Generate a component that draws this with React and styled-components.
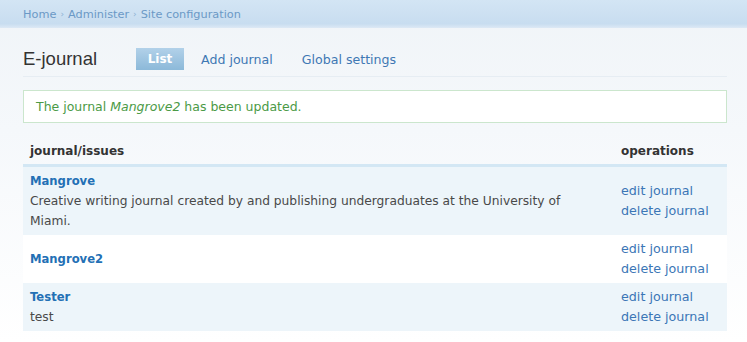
import React from "react";
import styled, { createGlobalStyle } from "styled-components";

const Global = createGlobalStyle`
  html, body { margin: 0; padding: 0; background: #fff; }
  body { font-family: "DejaVu Sans", Verdana, sans-serif; font-size: 12px; color: #494949; }
  * { box-sizing: border-box; }
`;

const Page = styled.div`
  width: 747px;
  min-height: 342px;
  background: linear-gradient(#f0f4f8 0px, #f5f8fb 130px, #ffffff 342px);
`;

const TopBar = styled.div`
  height: 28px;
  padding-left: 23px;
  display: flex;
  align-items: center;
  background: linear-gradient(#d3e5f4, #c8ddf0 85%, #dde9f5);
  font-size: 11.3px;
  color: #6b99c6;
`;

const Crumb = styled.span`
  color: #6b99c6;
`;

const Sep = styled.span`
  color: #8fb2d3;
  margin: 0 4px;
  font-size: 9px;
`;

const Main = styled.div`
  padding: 0 20px 0 23px;
`;

const TitleRow = styled.div`
  display: flex;
  align-items: center;
  padding: 20px 0 6px;
  border-bottom: 1px solid #e6edf3;
`;

const Title = styled.h1`
  margin: 0;
  font-family: "Liberation Sans", Arial, sans-serif;
  font-weight: normal;
  font-size: 18.5px;
  line-height: 22px;
  color: #333;
  width: 113px;
`;

const Tabs = styled.div`
  display: flex;
  align-items: center;
`;

const Tab = styled.span`
  display: inline-flex;
  align-items: center;
  justify-content: center;
  height: 22px;
  width: ${(p) => (p.$active ? "48px" : "auto")};
  margin-right: ${(p) => p.$gap}px;
  font-size: ${(p) => (p.$active ? "12px" : "12.6px")};
  font-weight: ${(p) => (p.$active ? "bold" : "normal")};
  color: ${(p) => (p.$active ? "#fff" : "#3f78b4")};
  background: ${(p) => (p.$active ? "linear-gradient(#b2d1e9, #8cb9d9)" : "transparent")};
`;

const Message = styled.div`
  margin-top: 13px;
  height: 33px;
  border: 1px solid #cbe6cd;
  background: #fff;
  display: flex;
  align-items: center;
  padding-left: 12px;
  font-size: 12.5px;
  color: #4b9a46;
`;

const Em = styled.em`
  font-style: italic;
`;

const Table = styled.table`
  width: 100%;
  margin-top: 16px;
  border-collapse: collapse;
  table-layout: fixed;
`;

const Th = styled.th`
  text-align: left;
  font-weight: bold;
  font-size: 12px;
  color: #333;
  padding: 5px 7px 5px;
  line-height: 15px;
  border-bottom: 3px solid #d3e7f4;
  width: ${(p) => p.$w || "auto"};
`;

const Tr = styled.tr`
  background: ${(p) => (p.$odd ? "#edf5fa" : "#fff")};
`;

const Td = styled.td`
  padding: 4px ${(p) => (p.$wide ? "30px" : "7px")} 4px 7px;
  line-height: 20px;
  vertical-align: middle;
`;

const Name = styled.a`
  display: block;
  font-weight: bold;
  font-size: 11.6px;
  color: #2370b5;
  text-decoration: none;
`;

const Desc = styled.div`
  font-size: 12.25px;
  color: #494949;
`;

const Op = styled.a`
  display: block;
  font-size: 12.7px;
  color: #3b76b6;
  text-decoration: none;
`;

const rows = [
  { name: "Mangrove", desc: "Creative writing journal created by and publishing undergraduates at the University of Miami." },
  { name: "Mangrove2", desc: "" },
  { name: "Tester", desc: "test" },
];

export default function App() {
  return (
    <>
      <Global />
      <Page>
        <TopBar>
          <Crumb>Home</Crumb>
          <Sep>›</Sep>
          <Crumb>Administer</Crumb>
          <Sep>›</Sep>
          <Crumb>Site configuration</Crumb>
        </TopBar>
        <Main>
          <TitleRow>
            <Title>E-journal</Title>
            <Tabs>
              <Tab $active $gap={17}>List</Tab>
              <Tab $gap={29}>Add journal</Tab>
              <Tab $gap={0}>Global settings</Tab>
            </Tabs>
          </TitleRow>
          <Message>
            The journal&nbsp;<Em>Mangrove2</Em>&nbsp;has been updated.
          </Message>
          <Table>
            <thead>
              <tr>
                <Th $w="591px">journal/issues</Th>
                <Th>operations</Th>
              </tr>
            </thead>
            <tbody>
              {rows.map((r, i) => (
                <Tr key={r.name} $odd={i % 2 === 0}>
                  <Td $wide>
                    <Name href="#">{r.name}</Name>
                    {r.desc && <Desc>{r.desc}</Desc>}
                  </Td>
                  <Td>
                    <Op href="#">edit journal</Op>
                    <Op href="#">delete journal</Op>
                  </Td>
                </Tr>
              ))}
            </tbody>
          </Table>
        </Main>
      </Page>
    </>
  );
}
